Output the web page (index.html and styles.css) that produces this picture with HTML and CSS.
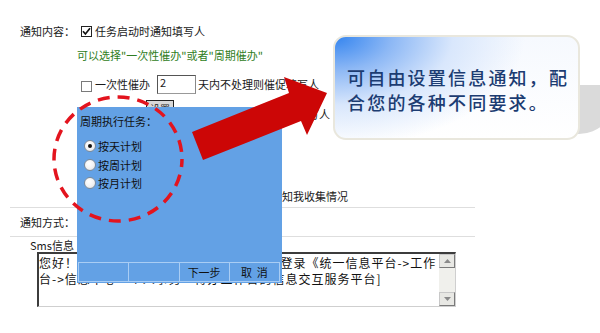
FILE: index.html
```html
<!DOCTYPE html>
<html>
<head>
<meta charset="utf-8">
<link rel="stylesheet" href="styles.css">
</head>
<body>
<div class="page">
  <div class="form">
    <div class="row r1">
      <span class="label">通知内容：</span>
      <span class="cb cb-on"><svg width="11" height="11" viewBox="0 0 11 11"><path d="M2 5.2 L4.4 8 L9 2.2" fill="none" stroke="#111" stroke-width="1.7"/></svg></span>
      <span>任务启动时通知填写人</span>
    </div>
    <div class="row r2"><span class="hint">可以选择"一次性催办"或者"周期催办"</span></div>
    <div class="row r3">
      <span class="cb"></span>
      <span>一次性催办</span>
      <span class="num">2</span>
      <span>天内不处理则催促填写人</span>
    </div>
    <div class="row r4">
      <span class="cb"></span>
      <span>周期催办</span>
      <span class="btn">设置</span>
      <span class="after-btn">按设定周期催促未处理的填写人</span>
    </div>
    <div class="spacer"></div>
    <div class="row r5">
      <span class="cb"></span>
      <span>所有人填写完成后或到达截止时间后通知我收集情况</span>
    </div>
  </div>
  <div class="section">
    <div class="row r6"><span class="label2">通知方式：</span></div>
    <div class="row r7"><span class="sms">Sms信息</span></div>
    <div class="ta">
      <div class="ta-text">您好！您有一项新任务需要处理，请尽快&nbsp;&nbsp;登录《统一信息平台->工作<br>台->信息中心->个人事务->待办工作台的信息交互服务平台]</div>
      <div class="sb">
        <span class="sb-btn"><svg width="7" height="4" viewBox="0 0 7 4"><path d="M0 4 L3.5 0 L7 4Z" fill="#8a8a8a"/></svg></span>
        <span class="sb-track"></span>
        <span class="sb-btn"><svg width="7" height="4" viewBox="0 0 7 4"><path d="M0 0 L3.5 4 L7 0Z" fill="#8a8a8a"/></svg></span>
      </div>
    </div>
  </div>

  <div class="panel">
    <div class="p-title">周期执行任务：</div>
    <div class="radios">
      <div class="radio-row"><span class="radio on"></span><span>按天计划</span></div>
      <div class="radio-row"><span class="radio"></span><span>按周计划</span></div>
      <div class="radio-row"><span class="radio"></span><span>按月计划</span></div>
    </div>
    <div class="bar">
      <span class="cell"></span>
      <span class="cell"></span>
      <span class="cell">下一步</span>
      <span class="cell">取&nbsp;&nbsp;消</span>
    </div>
  </div>

  <svg class="overlay" width="600" height="333" viewBox="0 0 600 333">
    <ellipse cx="118" cy="159" rx="64" ry="62" fill="none" stroke="#e3141e" stroke-width="3.5" stroke-dasharray="12 8" stroke-dashoffset="4"/>
    <polygon points="192,132 289,93 284,77 327,93 307,135 301,121 203,160" fill="#cc0606"/>
  </svg>

  <div class="shadow"></div>
  <div class="callout">
    <div class="c-text">可自由设置信息通知，配<br>合您的各种不同要求。</div>
  </div>
</div>
</body>
</html>
```

FILE: styles.css
```css
html, body {
  margin: 0;
  padding: 0;
  background: #fff;
}

.page {
  position: relative;
  width: 600px;
  height: 333px;
  overflow: hidden;
  background: #fff;
  font-family: "Noto Sans CJK SC", sans-serif;
  font-size: 11px;
  color: #1a1a1a;
}

.form {
  padding-top: 20px;
}

.row {
  display: flex;
  align-items: center;
  white-space: nowrap;
}

.r1 {
  height: 22px;
}

.label {
  width: 61px;
  padding-left: 20px;
  box-sizing: content-box;
}

.cb {
  display: inline-flex;
  width: 9px;
  height: 9px;
  border: 1px solid #7a7a7a;
  background: #fff;
  margin-right: 3px;
  flex: none;
}

.cb-on {
  border-color: #222;
}

.cb-on svg {
  margin: -1px;
}

.r2 {
  height: 26px;
  padding-left: 77px;
}

.hint {
  color: #2f7d22;
}

.r3 {
  height: 32px;
  padding-left: 81px;
}

.r3 .cb {
  margin-top: 4px;
}

.num {
  width: 35px;
  height: 17px;
  border: 1px solid #555;
  border-right-color: #888;
  border-bottom-color: #999;
  margin: 0 2px 0 7px;
  padding-left: 2px;
  line-height: 13px;
  box-sizing: content-box;
}

.r4 {
  height: 28px;
  padding-left: 81px;
}

.btn {
  align-self: flex-start;
  width: 26px;
  height: 16px;
  border: 1px solid #222;
  background: #d8d8d8;
  margin-left: 7px;
  text-align: center;
  font-size: 10px;
  line-height: 16px;
}

.after-btn {
  margin-left: 2px;
}

.spacer {
  height: 57px;
}

.r5 {
  height: 22px;
  padding-left: 81px;
}

.section {
  margin-left: 10px;
  width: 465px;
  border-top: 1px solid #dedede;
}

.r6 {
  height: 28px;
  padding-left: 10px;
  border-bottom: 1px solid #dedede;
}

.r7 {
  height: 15px;
  padding-left: 20px;
}

.ta {
  margin-left: 27px;
  width: 416px;
  height: 52px;
  display: flex;
  border-top: 2px solid #3c3c3c;
  border-left: 2px solid #3c3c3c;
  border-right: 1px solid #cfcfcf;
  border-bottom: 1px solid #cfcfcf;
  background: #fff;
}

.ta-text {
  flex: 1;
  font-size: 12px;
  letter-spacing: 1px;
  line-height: 16px;
  padding-top: 1px;
  overflow: hidden;
  white-space: nowrap;
  color: #111;
}

.sb {
  width: 16px;
  display: flex;
  flex-direction: column;
  background: #f0f0ec;
}

.sb-btn {
  height: 14px;
  border: 1px solid #c8c8c8;
  border-right-color: #7a7a7a;
  border-bottom-color: #7a7a7a;
  background: #e8e8e4;
  display: flex;
  align-items: center;
  justify-content: center;
  box-sizing: border-box;
}

.sb-track {
  flex: 1;
}

/* popup panel */
.panel {
  position: absolute;
  left: 77px;
  top: 107px;
  width: 205px;
  height: 176px;
  background: #63a1e5;
  display: flex;
  flex-direction: column;
  box-sizing: border-box;
  color: #101010;
}

.p-title {
  padding: 6px 0 0 3px;
  line-height: 16px;
}

.radios {
  margin-top: 8px;
  padding-left: 7px;
}

.radio-row {
  display: flex;
  align-items: center;
  height: 18.5px;
}

.radio {
  width: 10px;
  height: 10px;
  border: 1px solid #7d8a99;
  border-radius: 50%;
  background: radial-gradient(circle at 40% 35%, #ffffff 0%, #f2f2f2 55%, #d4d8dc 100%);
  margin-right: 2px;
  display: flex;
  align-items: center;
  justify-content: center;
}

.radio.on::after {
  content: "";
  width: 4px;
  height: 4px;
  border-radius: 50%;
  background: #111;
}

.bar {
  margin: auto 2px 1px 1px;
  height: 20px;
  display: flex;
  border: 1px solid #a9cdf4;
  box-sizing: border-box;
}

.cell {
  flex: 1;
  border-left: 1px solid #a9cdf4;
  display: flex;
  align-items: center;
  justify-content: center;
}

.cell:first-child {
  border-left: none;
}

.overlay {
  position: absolute;
  left: 0;
  top: 0;
}

/* callout */
.shadow {
  position: absolute;
  left: 545px;
  top: 85px;
  width: 70px;
  height: 49px;
  background: #dadada;
  border-radius: 0 0 36px 0;
}

.callout {
  position: absolute;
  left: 333px;
  top: 35px;
  width: 247px;
  height: 105px;
  box-sizing: border-box;
  border: 2px solid #e9e7dd;
  border-radius: 13px;
  background:
    radial-gradient(ellipse 190px 110px at 0 0, #3585ef 0%, #8db8f5 30%, #d9e7fc 62%, rgba(255,255,255,0) 100%),
    linear-gradient(180deg, #f6f9fe 0%, #ffffff 100%);
}

.c-text {
  padding: 28px 0 0 12px;
  font-size: 18px;
  line-height: 25px;
  letter-spacing: 2.2px;
  color: #1c3c72;
  font-weight: 500;
  white-space: nowrap;
}
```
